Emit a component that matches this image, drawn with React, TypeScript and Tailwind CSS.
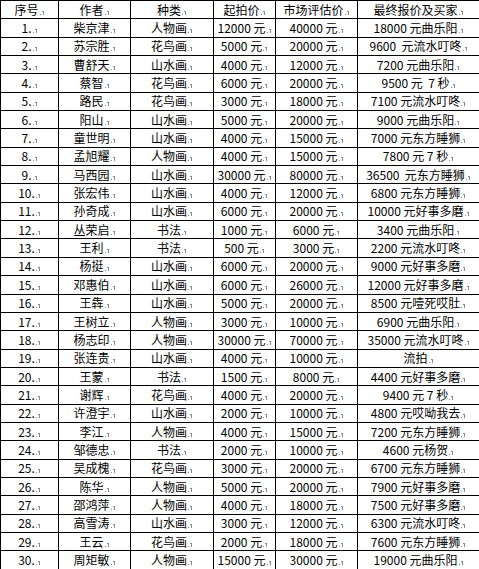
import React from "react";

const rows: string[][] = [
  ["1", "柴京津", "人物画", "12000 元", "40000 元", "18000 元曲乐阳"],
  ["2", "苏宗胜", "花鸟画", "5000 元", "20000 元", "9600  元流水叮咚"],
  ["3", "曹舒天", "山水画", "4000 元", "12000 元", "7200 元曲乐阳"],
  ["4", "蔡智", "花鸟画", "6000 元", "20000 元", "9500 元  7 秒"],
  ["5", "路民", "花鸟画", "3000 元", "18000 元", "7100 元流水叮咚"],
  ["6", "阳山", "山水画", "5000 元", "20000 元", "9000 元曲乐阳"],
  ["7", "童世明", "山水画", "4000 元", "15000 元", "7000 元东方睡狮"],
  ["8", "孟旭耀", "人物画", "4000 元", "15000 元", "7800 元 7 秒"],
  ["9", "马西园", "山水画", "30000 元", "80000 元", "36500  元东方睡狮"],
  ["10", "张宏伟", "山水画", "4000 元", "12000 元", "6800 元东方睡狮"],
  ["11", "孙奇成", "山水画", "6000 元", "20000 元", "10000 元好事多磨"],
  ["12", "丛荣启", "书法", "1000 元", "6000 元", "3400 元曲乐阳"],
  ["13", "王利", "书法", "500 元", "3000 元", "2200 元流水叮咚"],
  ["14", "杨挺", "山水画", "6000 元", "20000 元", "9000 元好事多磨"],
  ["15", "邓惠伯", "山水画", "6000 元", "26000 元", "12000 元好事多磨"],
  ["16", "王犇", "山水画", "5000 元", "20000 元", "8500 元噎死哎肚"],
  ["17", "王树立", "人物画", "3000 元", "10000 元", "6900 元曲乐阳"],
  ["18", "杨志印", "人物画", "30000 元", "70000 元", "35000 元流水叮咚"],
  ["19", "张连贵", "山水画", "4000 元", "10000 元", "流拍"],
  ["20", "王蒙", "书法", "1500 元", "8000 元", "4400 元好事多磨"],
  ["21", "谢辉", "花鸟画", "4000 元", "20000 元", "9400 元 7 秒"],
  ["22", "许澄宇", "山水画", "2000 元", "10000 元", "4800 元哎呦我去"],
  ["23", "李江", "人物画", "4000 元", "15000 元", "7200 元东方睡狮"],
  ["24", "邹德忠", "书法", "2000 元", "10000 元", "4600 元杨贺"],
  ["25", "吴成槐", "花鸟画", "3000 元", "20000 元", "6700 元东方睡狮"],
  ["26", "陈华", "人物画", "5000 元", "20000 元", "7900 元好事多磨"],
  ["27", "邵鸿萍", "人物画", "4000 元", "18000 元", "7500 元好事多磨"],
  ["28", "高雪涛", "山水画", "3000 元", "12000 元", "6300 元流水叮咚"],
  ["29", "王云", "花鸟画", "2000 元", "18000 元", "7600 元东方睡狮"],
  ["30", "周矩敏", "人物画", "15000 元", "30000 元", "19000 元曲乐阳"],
];

const header = ["序号", "作者", "种类", "起拍价", "市场评估价", "最终报价及买家"];

function Mark() {
  return (
    <svg width="5" height="6" viewBox="0 0 5 6" className="inline-block ml-[1px] align-baseline">
      <rect x="0" y="5" width="1" height="1" fill="#8a8a8a" />
      <rect x="3" y="2" width="1" height="4" fill="#8a8a8a" />
      <rect x="2" y="2" width="1" height="1" fill="#8a8a8a" />
    </svg>
  );
}

function Cell({ text, first }: { text: string; first?: boolean }) {
  return (
    <td className="border border-black p-0 text-center whitespace-pre leading-none">
      {first ? text + "." : text}
      <Mark />
    </td>
  );
}

export default function App() {
  return (
    <div className="w-[479px] h-[569px] overflow-hidden bg-white text-black text-[12px] font-normal font-['Noto_Sans_CJK_SC',sans-serif]">
      <table className="table-fixed border-collapse border border-black w-[479px]">
        <colgroup>
          <col className="w-[58px]" />
          <col className="w-[72px]" />
          <col className="w-[83px]" />
          <col className="w-[62px]" />
          <col className="w-[82px]" />
          <col className="w-[122px]" />
        </colgroup>
        <tbody>
          <tr className="h-[18.35px]">
            {header.map((h) => (
              <td key={h} className="border border-black p-0 text-center leading-none">
                {h}
                <Mark />
              </td>
            ))}
          </tr>
          {rows.map((r) => (
            <tr key={r[0]} className="h-[18.35px]">
              {r.map((c, i) => (
                <Cell key={i} text={c} first={i === 0} />
              ))}
            </tr>
          ))}
        </tbody>
      </table>
    </div>
  );
}
